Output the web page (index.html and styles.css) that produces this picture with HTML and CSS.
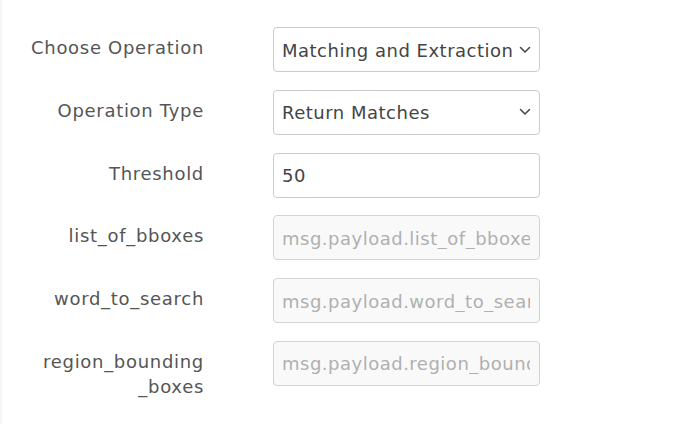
FILE: index.html
```html
<!DOCTYPE html>
<html>
<head>
<meta charset="utf-8">
<link rel="stylesheet" href="styles.css">
</head>
<body>
<form class="form">
  <label class="label">Choose Operation</label>
  <div class="field">
    <select class="input select"><option>Matching and Extraction</option></select>
  </div>
  <label class="label">Operation Type</label>
  <div class="field">
    <select class="input select"><option>Return Matches</option></select>
  </div>
  <label class="label">Threshold</label>
  <div class="field"><input class="input" type="text" value="50"></div>
  <label class="label">list_of_bboxes</label>
  <div class="field"><input class="input" type="text" disabled placeholder="msg.payload.list_of_bboxes"></div>
  <label class="label">word_to_search</label>
  <div class="field"><input class="input" type="text" disabled placeholder="msg.payload.word_to_search"></div>
  <label class="label">region_bounding<br>_boxes</label>
  <div class="field"><input class="input" type="text" disabled placeholder="msg.payload.region_bounding_boxes"></div>
</form>
</body>
</html>
```
FILE: styles.css
```css
html, body {
  margin: 0;
  background: #fff;
}
body {
  font-family: "DejaVu Sans", "Liberation Sans", sans-serif;
  border-left: 2px solid #f6f6f6;
  height: 424px;
  box-sizing: border-box;
}
.form {
  display: grid;
  grid-template-columns: 202px 267px;
  column-gap: 69px;
  row-gap: 17.8px;
  padding-top: 27px;
}
.label {
  text-align: right;
  font-size: 18px;
  line-height: 25px;
  letter-spacing: 0.7px;
  color: #555;
  padding-top: 8px;
}
.field {
  height: 45px;
}
.input {
  box-sizing: border-box;
  width: 267px;
  height: 45px;
  margin: 0;
  border: 1px solid #ccc;
  border-radius: 4px;
  padding: 1px 9px 0 8px;
  font-family: inherit;
  font-size: 18px;
  letter-spacing: 0.5px;
  color: #444;
  background: #fff;
  outline: none;
}
.input::placeholder {
  color: #b0b0b0;
}
.input:disabled {
  background: #f9f9f9;
  border-color: #d4d4d4;
}
.select {
  appearance: none;
  -webkit-appearance: none;
  padding-right: 24px;
  background-image: url("data:image/svg+xml;utf8,<svg xmlns='http://www.w3.org/2000/svg' width='12' height='8' viewBox='0 0 12 8'><path d='M1.5 1.5 L6 6 L10.5 1.5' fill='none' stroke='%23444' stroke-width='1.5' stroke-linecap='round' stroke-linejoin='round'/></svg>");
  background-repeat: no-repeat;
  background-position: right 8px center;
  background-size: 12px 8px;
}
```
